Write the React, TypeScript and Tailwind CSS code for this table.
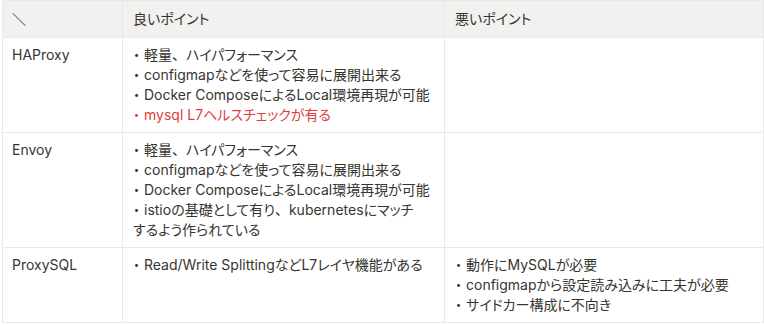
import React from "react";

type Line = { text: string; red?: boolean };

const rows: { name: string; good: Line[]; bad: Line[] }[] = [
  {
    name: "HAProxy",
    good: [
      { text: "軽量、ハイパフォーマンス" },
      { text: "configmapなどを使って容易に展開出来る" },
      { text: "Docker ComposeによるLocal環境再現が可能" },
      { text: "mysql L7ヘルスチェックが有る", red: true },
    ],
    bad: [],
  },
  {
    name: "Envoy",
    good: [
      { text: "軽量、ハイパフォーマンス" },
      { text: "configmapなどを使って容易に展開出来る" },
      { text: "Docker ComposeによるLocal環境再現が可能" },
      { text: "istioの基礎として有り、kubernetesにマッチ\nするよう作られている" },
    ],
    bad: [],
  },
  {
    name: "ProxySQL",
    good: [{ text: "Read/Write SplittingなどL7レイヤ機能がある" }],
    bad: [
      { text: "動作にMySQLが必要" },
      { text: "configmapから設定読み込みに工夫が必要" },
      { text: "サイドカー構成に不向き" },
    ],
  },
];

// Full-width ideographic comma keeps its em box while kana stay proportional.
function Text({ value }: { value: string }) {
  const parts = value.split("、");
  return (
    <>
      {parts.map((p, i) => (
        <React.Fragment key={i}>
          {p}
          {i < parts.length - 1 && (
            <span className="[font-feature-settings:normal]">、</span>
          )}
        </React.Fragment>
      ))}
    </>
  );
}

function Cell({ lines }: { lines: Line[] }) {
  return (
    <td className="border border-[#e9e9e7] px-[10px] py-[7px] align-top">
      {lines.map((l, i) => (
        <div key={i} className={`whitespace-pre-line ${l.red ? "text-[#e03e3e]" : ""}`}>
          <span className="mr-[4px]">・</span>
          <Text value={l.text} />
        </div>
      ))}
    </td>
  );
}

export default function App() {
  return (
    <div
      className="w-[764px] h-[325px] bg-white pl-[2px] text-[14px] leading-[20px] text-[#37352f] [font-feature-settings:'palt']"
      style={{ fontFamily: '"Inter", "Noto Sans CJK JP", sans-serif' }}
    >
      <table className="w-[761px] border-collapse table-fixed">
        <colgroup>
          <col className="w-[120px]" />
          <col className="w-[322px]" />
          <col className="w-[319px]" />
        </colgroup>
        <thead>
          <tr className="bg-[#f1f1ef] h-[37px]">
            <th className="border border-[#e9e9e7] px-[9px] text-left font-normal">＼</th>
            <th className="border border-[#e9e9e7] px-[10px] text-left font-normal">良いポイント</th>
            <th className="border border-[#e9e9e7] px-[10px] text-left font-normal">悪いポイント</th>
          </tr>
        </thead>
        <tbody>
          {rows.map((r) => (
            <tr key={r.name}>
              <td className="border border-[#e9e9e7] px-[9px] py-[7px] align-top">{r.name}</td>
              <Cell lines={r.good} />
              <Cell lines={r.bad} />
            </tr>
          ))}
        </tbody>
      </table>
    </div>
  );
}
